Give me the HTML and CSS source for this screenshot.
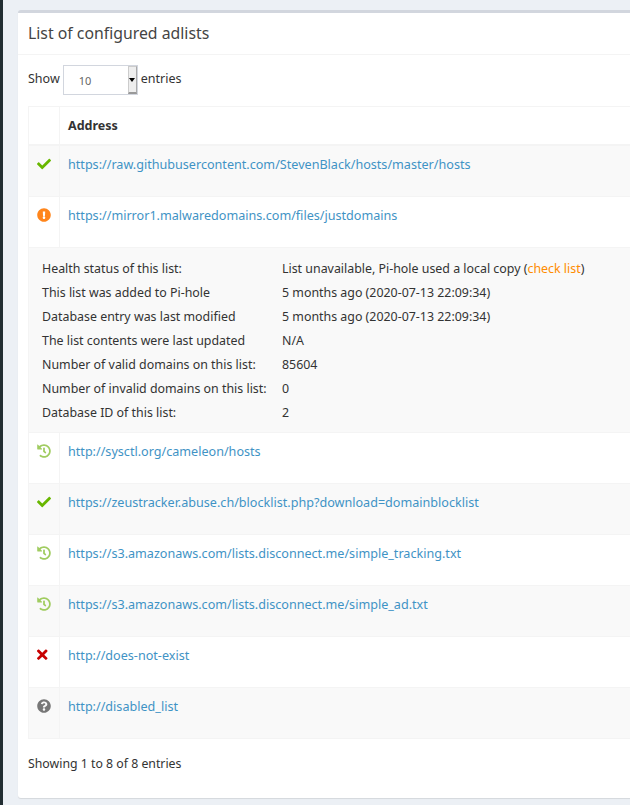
FILE: index.html
```html
<!DOCTYPE html>
<html lang="en">
<head>
<meta charset="utf-8">
<title>Adlists</title>
<link rel="stylesheet" href="styles.css">
</head>
<body>
<div class="layout">
  <aside class="sidebar"></aside>
  <main class="content">
    <section class="box">
      <header class="box-header"><h3 class="box-title">List of configured adlists</h3></header>
      <div class="box-body">
        <div class="length">
          <span class="length-label">Show</span>
          <span class="select"><span class="select-value">10</span><span class="select-btn"><span class="select-arrow"></span></span></span>
          <span class="length-label">entries</span>
        </div>
        <table class="adlists">
          <thead><tr><th class="col-icon"></th><th>Address</th></tr></thead>
          <tbody>
            <tr class="odd">
              <td class="col-icon"><svg class="icon ok" viewBox="0 0 512 512"><path d="M173.898 439.404l-166.4-166.4c-9.997-9.997-9.997-26.206 0-36.204l36.203-36.204c9.997-9.998 26.207-9.998 36.204 0L192 312.69 432.095 72.596c9.997-9.997 26.207-9.997 36.204 0l36.203 36.204c9.997 9.997 9.997 26.206 0 36.204l-294.4 294.401c-9.998 9.997-26.207 9.997-36.204-.001z"/></svg></td>
              <td><a href="#">https://raw.githubusercontent.com/StevenBlack/hosts/master/hosts</a></td>
            </tr>
            <tr>
              <td class="col-icon"><svg class="icon warn" viewBox="0 0 512 512"><path d="M504 256c0 136.997-111.043 248-248 248S8 392.997 8 256C8 119.083 119.043 8 256 8s248 111.083 248 248zm-248 50c-25.405 0-46 20.595-46 46s20.595 46 46 46 46-20.595 46-46-20.595-46-46-46zm-43.673-165.346l7.418 136c.347 6.364 5.609 11.346 11.982 11.346h48.546c6.373 0 11.635-4.982 11.982-11.346l7.418-136c.375-6.874-5.098-12.654-11.982-12.654h-63.383c-6.884 0-12.356 5.78-11.981 12.654z"/></svg></td>
              <td><a href="#">https://mirror1.malwaredomains.com/files/justdomains</a></td>
            </tr>
            <tr class="details-row">
              <td colspan="2">
                <dl class="details">
                  <dt>Health status of this list:</dt><dd>List unavailable, Pi-hole used a local copy (<a class="check" href="#">check list</a>)</dd>
                  <dt>This list was added to Pi-hole</dt><dd>5 months ago (2020-07-13 22:09:34)</dd>
                  <dt>Database entry was last modified</dt><dd>5 months ago (2020-07-13 22:09:34)</dd>
                  <dt>The list contents were last updated</dt><dd>N/A</dd>
                  <dt>Number of valid domains on this list:</dt><dd>85604</dd>
                  <dt>Number of invalid domains on this list:</dt><dd>0</dd>
                  <dt>Database ID of this list:</dt><dd>2</dd>
                </dl>
              </td>
            </tr>
            <tr>
              <td class="col-icon"><svg class="icon hist" viewBox="0 0 512 512"><path d="M504 255.531c.253 136.64-111.18 248.372-247.82 248.468-59.015.042-113.223-20.53-155.822-54.911-11.077-8.94-11.905-25.541-1.839-35.607l11.267-11.267c8.609-8.609 22.353-9.551 31.891-1.984C173.062 425.135 212.781 440 256 440c101.705 0 184-82.311 184-184 0-101.705-82.311-184-184-184-48.814 0-93.149 18.969-126.068 49.932l50.754 50.754c10.08 10.08 2.941 27.314-11.313 27.314H24c-8.837 0-16-7.163-16-16V38.627c0-14.254 17.234-21.393 27.314-11.314l49.372 49.372C129.209 34.136 189.552 8 256 8c136.81 0 247.747 110.78 248 247.531zm-180.912 78.784l9.823-12.63c8.138-10.463 6.253-25.542-4.21-33.679L288 256.349V152c0-13.255-10.745-24-24-24h-16c-13.255 0-24 10.745-24 24v135.651l65.409 50.874c10.463 8.137 25.541 6.253 33.679-4.21z"/></svg></td>
              <td><a href="#">http://sysctl.org/cameleon/hosts</a></td>
            </tr>
            <tr class="odd">
              <td class="col-icon"><svg class="icon ok" viewBox="0 0 512 512"><path d="M173.898 439.404l-166.4-166.4c-9.997-9.997-9.997-26.206 0-36.204l36.203-36.204c9.997-9.998 26.207-9.998 36.204 0L192 312.69 432.095 72.596c9.997-9.997 26.207-9.997 36.204 0l36.203 36.204c9.997 9.997 9.997 26.206 0 36.204l-294.4 294.401c-9.998 9.997-26.207 9.997-36.204-.001z"/></svg></td>
              <td><a href="#">https://zeustracker.abuse.ch/blocklist.php?download=domainblocklist</a></td>
            </tr>
            <tr>
              <td class="col-icon"><svg class="icon hist" viewBox="0 0 512 512"><path d="M504 255.531c.253 136.64-111.18 248.372-247.82 248.468-59.015.042-113.223-20.53-155.822-54.911-11.077-8.94-11.905-25.541-1.839-35.607l11.267-11.267c8.609-8.609 22.353-9.551 31.891-1.984C173.062 425.135 212.781 440 256 440c101.705 0 184-82.311 184-184 0-101.705-82.311-184-184-184-48.814 0-93.149 18.969-126.068 49.932l50.754 50.754c10.08 10.08 2.941 27.314-11.313 27.314H24c-8.837 0-16-7.163-16-16V38.627c0-14.254 17.234-21.393 27.314-11.314l49.372 49.372C129.209 34.136 189.552 8 256 8c136.81 0 247.747 110.78 248 247.531zm-180.912 78.784l9.823-12.63c8.138-10.463 6.253-25.542-4.21-33.679L288 256.349V152c0-13.255-10.745-24-24-24h-16c-13.255 0-24 10.745-24 24v135.651l65.409 50.874c10.463 8.137 25.541 6.253 33.679-4.21z"/></svg></td>
              <td><a href="#">https://s3.amazonaws.com/lists.disconnect.me/simple_tracking.txt</a></td>
            </tr>
            <tr class="odd">
              <td class="col-icon"><svg class="icon hist" viewBox="0 0 512 512"><path d="M504 255.531c.253 136.64-111.18 248.372-247.82 248.468-59.015.042-113.223-20.53-155.822-54.911-11.077-8.94-11.905-25.541-1.839-35.607l11.267-11.267c8.609-8.609 22.353-9.551 31.891-1.984C173.062 425.135 212.781 440 256 440c101.705 0 184-82.311 184-184 0-101.705-82.311-184-184-184-48.814 0-93.149 18.969-126.068 49.932l50.754 50.754c10.08 10.08 2.941 27.314-11.313 27.314H24c-8.837 0-16-7.163-16-16V38.627c0-14.254 17.234-21.393 27.314-11.314l49.372 49.372C129.209 34.136 189.552 8 256 8c136.81 0 247.747 110.78 248 247.531zm-180.912 78.784l9.823-12.63c8.138-10.463 6.253-25.542-4.21-33.679L288 256.349V152c0-13.255-10.745-24-24-24h-16c-13.255 0-24 10.745-24 24v135.651l65.409 50.874c10.463 8.137 25.541 6.253 33.679-4.21z"/></svg></td>
              <td><a href="#">https://s3.amazonaws.com/lists.disconnect.me/simple_ad.txt</a></td>
            </tr>
            <tr>
              <td class="col-icon"><svg class="icon icon-times err" viewBox="0 0 352 512"><path d="M242.72 256l100.07-100.07c12.28-12.28 12.28-32.19 0-44.48l-22.24-22.24c-12.28-12.28-32.19-12.28-44.48 0L176 189.28 75.93 89.21c-12.28-12.28-32.19-12.28-44.48 0L9.21 111.45c-12.28 12.28-12.28 32.19 0 44.48L109.28 256 9.21 356.07c-12.28 12.28-12.28 32.19 0 44.48l22.24 22.24c12.28 12.28 32.2 12.28 44.48 0L176 322.72l100.07 100.07c12.28 12.28 32.2 12.28 44.48 0l22.24-22.24c12.28-12.28 12.28-32.19 0-44.48L242.72 256z"/></svg></td>
              <td><a href="#">http://does-not-exist</a></td>
            </tr>
            <tr class="odd">
              <td class="col-icon"><svg class="icon unk" viewBox="0 0 512 512"><path d="M504 256c0 136.997-111.043 248-248 248S8 392.997 8 256C8 119.083 119.043 8 256 8s248 111.083 248 248zM262.655 90c-54.497 0-89.255 22.957-116.549 63.758-3.536 5.286-2.353 12.415 2.715 16.258l34.699 26.31c5.205 3.947 12.621 3.008 16.665-2.122 17.864-22.658 30.113-35.797 57.303-35.797 20.429 0 45.698 13.148 45.698 32.958 0 14.976-12.363 22.667-32.534 33.976C247.128 238.528 216 254.941 216 296v4c0 6.627 5.373 12 12 12h56c6.627 0 12-5.373 12-12v-1.333c0-28.462 83.186-29.647 83.186-106.667 0-58.002-60.165-102-116.531-102zM256 338c-25.365 0-46 20.635-46 46 0 25.364 20.635 46 46 46s46-20.636 46-46c0-25.365-20.635-46-46-46z"/></svg></td>
              <td><a href="#">http://disabled_list</a></td>
            </tr>
          </tbody>
        </table>
        <div class="info">Showing 1 to 8 of 8 entries</div>
      </div>
    </section>
  </main>
</div>
</body>
</html>
```
FILE: styles.css
```css
html, body {
  margin: 0;
  height: 805px;
  overflow: hidden;
  background: #ecf0f5;
  color: #333;
  font-family: "Noto Sans", sans-serif;
  font-size: 12.5px;
  line-height: 20px;
}
.layout { display: flex; width: 720px; height: 805px; }
.sidebar { flex: 0 0 3px; background: #222d32; }
.content { flex: 1; padding: 10px 0 0 15px; }
.box {
  height: 788px;
  box-sizing: border-box;
  background: #fff;
  border-top: 3px solid #d2d6de;
  border-radius: 3px;
  box-shadow: 0 1px 1px rgba(0,0,0,.1);
}
.box-header { height: 42px; box-sizing: border-box; padding: 10px; border-bottom: 1px solid #f4f4f4; }
.box-title { margin: 0; font-size: 15.8px; font-weight: 400; line-height: 20px; color: #444; }
.box-body { padding: 10px; }
.length { display: flex; align-items: flex-start; gap: 3px; height: 30px; }
.length-label { padding-top: 4px; }
.select {
  width: 75px; height: 30px; box-sizing: border-box;
  display: flex; align-items: stretch; justify-content: space-between;
  border: 1px solid #d2d6de; background: #fff;
}
.select-value { padding: 5px 0 0 15px; font-size: 11px; color: #666; }
.select-btn {
  width: 7px; display: flex; align-items: center; justify-content: center;
  background: #eee; border-left: 1px solid #ccc; border-right: 1px solid #aaa; border-bottom: 2px solid #999; border-top: 1px solid #ccc;
}
.select-arrow { width: 0; height: 0; border: 3px solid transparent; border-top: 4px solid #000; border-bottom: 0; }
.adlists { width: 100%; border-collapse: collapse; margin-top: 11px; table-layout: fixed; }
.adlists th, .adlists td { border: 1px solid #f4f4f4; padding: 9px 8px 7px; text-align: left; vertical-align: top; }
.adlists th { height: 20px; padding: 9px 8px 8px; border-bottom-width: 2px; font-weight: 700; }
.adlists td { height: 34px; }
.adlists .col-icon { width: 14px; padding: 8px; }
.adlists a { font-size: 12.6px; color: #3f93c5; text-decoration: none; }
.odd td { background: #f9f9f9; }
.icon { display: block; width: 14px; height: 14px; margin-top: 3px; }
.icon-times { width: 10.5px; height: 15.3px; margin-top: 2.4px; }
.ok { fill: #68b700; }
.warn { fill: #ff851b; }
.hist { fill: #a0cc60; }
.err { fill: #c80000; }
.unk { fill: #777; }
.adlists .details-row td { background: #f9f9f9; padding: 9px 14px 7px 13px; }
.details { display: grid; grid-template-columns: 240px 1fr; grid-auto-rows: 24px; margin: 0; align-items: center; font-size: 12.4px; }
.details dt, .details dd { margin: 0; }
.adlists .check { font-size: inherit; color: #ff8c00; }
.info { margin-top: 15px; font-size: 12.3px; }
```
